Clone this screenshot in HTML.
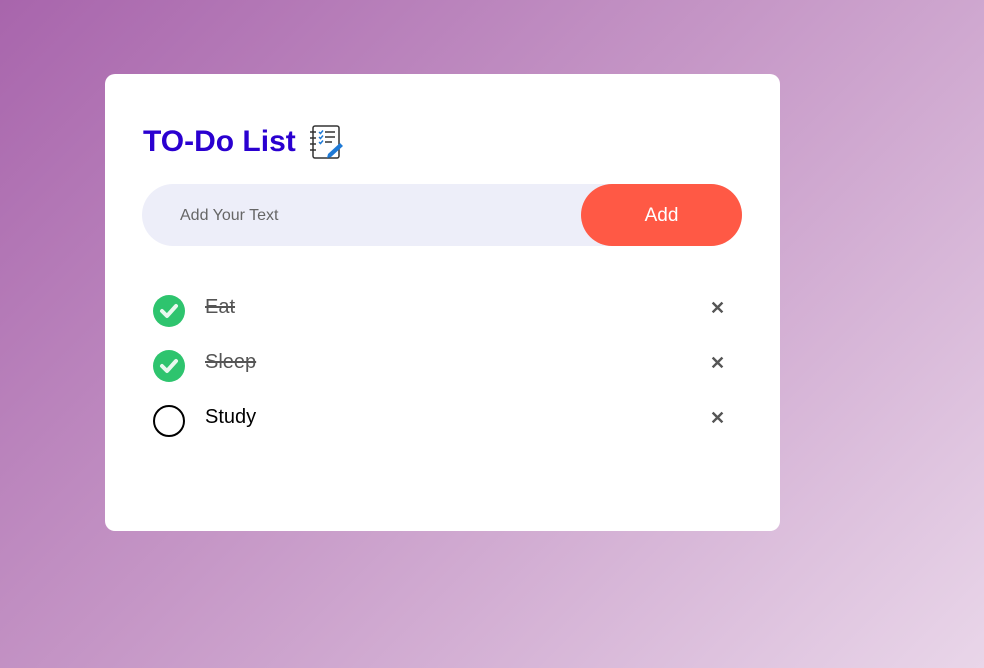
<!DOCTYPE html>
<html><head><style>
*{margin:0;padding:0;box-sizing:border-box}
body{width:984px;height:668px;overflow:hidden;font-family:"Liberation Sans",sans-serif;background:linear-gradient(135deg,#a865ac 0%,#c596c6 45%,#e9d6e9 100%);position:relative}
.card{position:absolute;left:105px;top:74px;width:675px;height:457px;background:#fff;border-radius:10px}
h2{position:absolute;left:38px;top:50px;font-size:30px;font-weight:bold;color:#2a00d0;display:flex;align-items:center}
.row{position:absolute;left:37px;top:110px;width:600px;height:62px;background:#edeef9;border-radius:31px}
.row span{position:absolute;left:38px;top:23px;font-size:16px;color:#666}
.btn{position:absolute;right:0;top:0;width:161px;height:62px;background:#ff5945;border-radius:31px;color:#fff;font-size:19px;text-align:center;line-height:64px}
.item{position:absolute;left:48px;height:32px;width:580px}
.c{position:absolute;left:0;top:0;width:32px;height:32px;border-radius:50%}
.t{position:absolute;left:52px;top:1px;font-size:20px;line-height:22px}
.x{position:absolute;left:557px;top:3px;font-size:18px;color:#555;font-weight:bold}
</style></head><body>
<div class="card">
<h2>TO-Do List <svg style="margin-left:12px" width="36" height="36" viewBox="0 0 36 36"><rect x="5" y="2" width="26" height="32" rx="2" fill="#fff" stroke="#333" stroke-width="1.5"/><g stroke="#333" stroke-width="1.5"><line x1="2" y1="8" x2="8" y2="8"/><line x1="2" y1="14" x2="8" y2="14"/><line x1="2" y1="20" x2="8" y2="20"/><line x1="2" y1="26" x2="8" y2="26"/><line x1="17" y1="8" x2="27" y2="8"/><line x1="17" y1="13" x2="27" y2="13"/><line x1="17" y1="18" x2="24" y2="18"/></g><g stroke="#1f7ad6" stroke-width="1.5" fill="none"><path d="M11 8l1.5 1.5 2.5-3"/><path d="M11 13l1.5 1.5 2.5-3"/><path d="M11 18l1.5 1.5 2.5-3"/></g><path d="M20 30l12-11 3 3-12 11-4 1z" fill="#1f7ad6"/></svg></h2>
<div class="row"><span>Add Your Text</span><div class="btn">Add</div></div>
<div class="item" style="top:221px"><div class="c" style="background:#2ec46e"><svg width="32" height="32"><path d="M9 16l5 5 9-10" stroke="#e8f8ee" stroke-width="4" fill="none" stroke-linecap="round" stroke-linejoin="round"/></svg></div><div class="t" style="color:#555;text-decoration:line-through">Eat</div><div class="x">✕</div></div>
<div class="item" style="top:276px"><div class="c" style="background:#2ec46e"><svg width="32" height="32"><path d="M9 16l5 5 9-10" stroke="#e8f8ee" stroke-width="4" fill="none" stroke-linecap="round" stroke-linejoin="round"/></svg></div><div class="t" style="color:#555;text-decoration:line-through">Sleep</div><div class="x">✕</div></div>
<div class="item" style="top:331px"><div class="c" style="border:2px solid #000"></div><div class="t" style="color:#000">Study</div><div class="x">✕</div></div>
</div>
</body></html>
